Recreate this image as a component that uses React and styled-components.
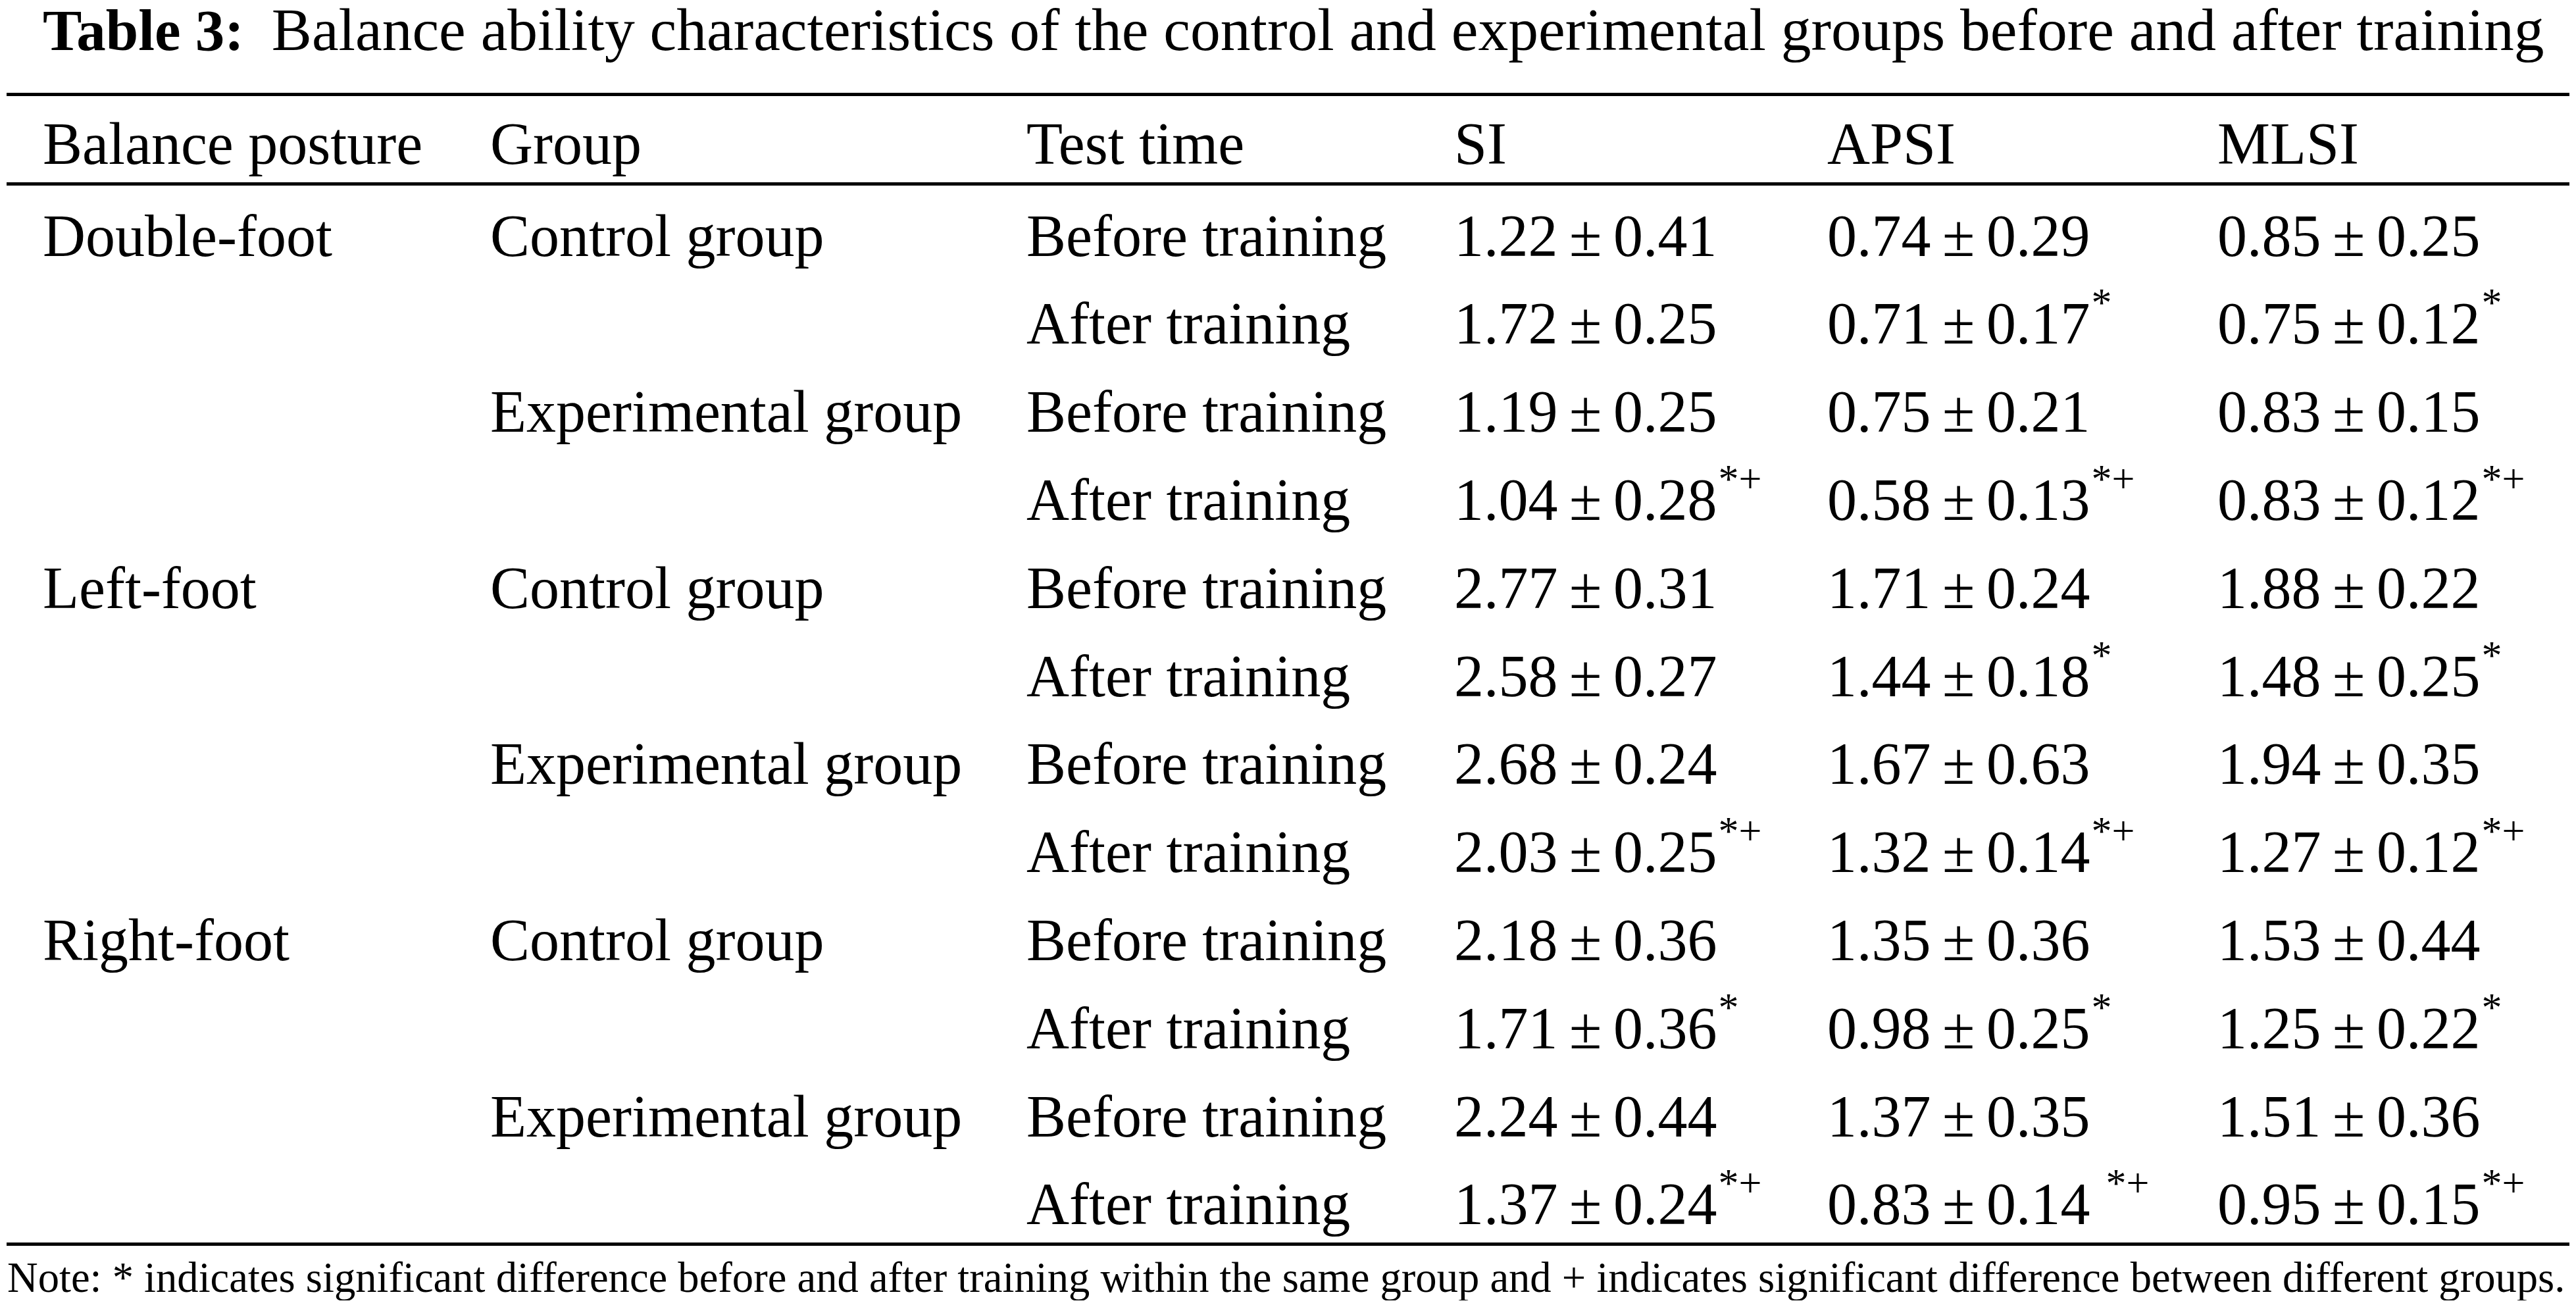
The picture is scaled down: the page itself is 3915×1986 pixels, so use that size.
import React from "react";
import styled, { createGlobalStyle } from "styled-components";

const GlobalStyle = createGlobalStyle`
  html, body {
    margin: 0;
    padding: 0;
    background: #ffffff;
  }
  body {
    font-family: "Liberation Serif", "Times New Roman", serif;
    color: #000000;
  }
`;

const Page = styled.div`
  width: 3895px;
  padding: 0 10px;
`;

const Caption = styled.div`
  font-size: 91.6px;
  line-height: 90px;
  padding-left: 55px;
  white-space: nowrap;
`;

const CaptionLabel = styled.b`
  font-weight: bold;
  font-size: 89px;
  margin-right: 42px;
`;

const Rule = styled.div`
  height: 5px;
  background: #000;
  margin-top: ${(p) => p.$top || 0}px;
`;

const Grid = styled.div`
  display: grid;
  grid-template-columns: 680px 815px 650px 567px 593px 1fr;
  row-gap: ${(p) => p.$gap || 0}px;
  padding: ${(p) => p.$pad || "0"};
  padding-left: 55px;
  font-size: 90px;
  line-height: 110px;
  white-space: nowrap;
`;

const Cell = styled.div`
  white-space: nowrap;
`;

const ValueCell = styled(Cell)`
  word-spacing: -5px;
`;

const Sup = styled.span`
  font-size: 62px;
  line-height: 0;
  vertical-align: 42px;
  word-spacing: 0;
  margin-left: ${(p) => (p.$gap ? 24 : 2)}px;
`;

const Note = styled.div`
  font-size: 64.6px;
  line-height: 70px;
  margin-top: 13px;
  padding-left: 1px;
  white-space: nowrap;
`;

const headers = ["Balance posture", "Group", "Test time", "SI", "APSI", "MLSI"];

const rows = [
  ["Double-foot", "Control group", "Before training", ["1.22 ± 0.41"], ["0.74 ± 0.29"], ["0.85 ± 0.25"]],
  ["", "", "After training", ["1.72 ± 0.25"], ["0.71 ± 0.17", "*"], ["0.75 ± 0.12", "*"]],
  ["", "Experimental group", "Before training", ["1.19 ± 0.25"], ["0.75 ± 0.21"], ["0.83 ± 0.15"]],
  ["", "", "After training", ["1.04 ± 0.28", "*+"], ["0.58 ± 0.13", "*+"], ["0.83 ± 0.12", "*+"]],
  ["Left-foot", "Control group", "Before training", ["2.77 ± 0.31"], ["1.71 ± 0.24"], ["1.88 ± 0.22"]],
  ["", "", "After training", ["2.58 ± 0.27"], ["1.44 ± 0.18", "*"], ["1.48 ± 0.25", "*"]],
  ["", "Experimental group", "Before training", ["2.68 ± 0.24"], ["1.67 ± 0.63"], ["1.94 ± 0.35"]],
  ["", "", "After training", ["2.03 ± 0.25", "*+"], ["1.32 ± 0.14", "*+"], ["1.27 ± 0.12", "*+"]],
  ["Right-foot", "Control group", "Before training", ["2.18 ± 0.36"], ["1.35 ± 0.36"], ["1.53 ± 0.44"]],
  ["", "", "After training", ["1.71 ± 0.36", "*"], ["0.98 ± 0.25", "*"], ["1.25 ± 0.22", "*"]],
  ["", "Experimental group", "Before training", ["2.24 ± 0.44"], ["1.37 ± 0.35"], ["1.51 ± 0.36"]],
  ["", "", "After training", ["1.37 ± 0.24", "*+"], ["0.83 ± 0.14", "*+", true], ["0.95 ± 0.15", "*+"]],
];

function Value({ v }) {
  const [text, mark, spaced] = v;
  return (
    <ValueCell>
      {text}
      {mark && <Sup $gap={spaced}>{mark}</Sup>}
    </ValueCell>
  );
}

export default function App() {
  return (
    <Page>
      <GlobalStyle />
      <Caption>
        <CaptionLabel>Table 3:</CaptionLabel>
        Balance ability characteristics of the control and experimental groups before and after training
      </Caption>
      <Rule $top={50} />
      <Grid $pad="18px 0 3px 0">
        {headers.map((h) => (
          <Cell key={h}>{h}</Cell>
        ))}
      </Grid>
      <Rule />
      <Grid $gap={23.8} $pad="21.6px 0 2.4px 0">
        {rows.map((r, i) => (
          <React.Fragment key={i}>
            <Cell>{r[0]}</Cell>
            <Cell>{r[1]}</Cell>
            <Cell>{r[2]}</Cell>
            <Value v={r[3]} />
            <Value v={r[4]} />
            <Value v={r[5]} />
          </React.Fragment>
        ))}
      </Grid>
      <Rule />
      <Note>
        Note: * indicates significant difference before and after training within the same group and + indicates significant difference between different groups.
      </Note>
    </Page>
  );
}
